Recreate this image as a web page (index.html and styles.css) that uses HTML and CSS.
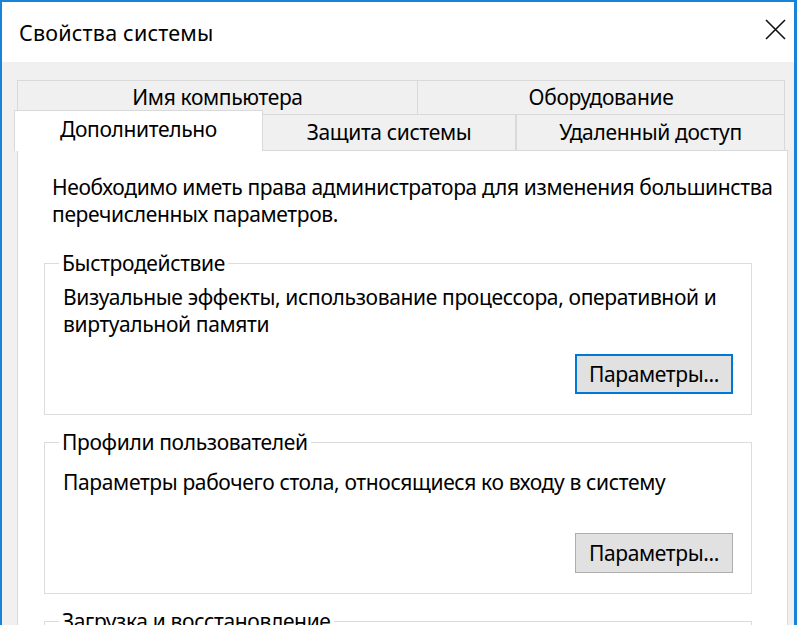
FILE: index.html
```html
<!DOCTYPE html>
<html lang="ru">
<head>
<meta charset="utf-8">
<title>Свойства системы</title>
<link rel="stylesheet" href="styles.css">
</head>
<body>
<div class="window">
  <header class="titlebar">
    <span class="title">Свойства системы</span>
    <svg class="close" width="21" height="21" viewBox="0 0 21 21" aria-label="Закрыть">
      <path d="M1 1 L20 20 M20 1 L1 20" stroke="#111" stroke-width="1.6" fill="none"/>
    </svg>
  </header>
  <div class="dialog">
    <div class="tabs">
      <div class="tab-row back">
        <div class="tab t-name">Имя компьютера</div>
        <div class="tab t-hw">Оборудование</div>
      </div>
      <div class="tab-row front">
        <div class="tab active t-adv">Дополнительно</div>
        <div class="tab t-prot">Защита системы</div>
        <div class="tab t-remote">Удаленный доступ</div>
      </div>
    </div>
    <div class="panel">
      <p class="intro">Необходимо иметь права администратора для изменения большинства<br>перечисленных параметров.</p>

      <fieldset class="group">
        <legend>Быстродействие</legend>
        <div class="group-body">
          <p class="desc">Визуальные эффекты, использование процессора, оперативной и<br>виртуальной памяти</p>
          <div class="actions"><button class="btn focused">Параметры...</button></div>
        </div>
      </fieldset>

      <fieldset class="group">
        <legend>Профили пользователей</legend>
        <div class="group-body">
          <p class="desc lower">Параметры рабочего стола, относящиеся ко входу в систему</p>
          <div class="actions"><button class="btn">Параметры...</button></div>
        </div>
      </fieldset>

      <fieldset class="group">
        <legend>Загрузка и восстановление</legend>
        <div class="group-body"></div>
      </fieldset>
    </div>
  </div>
</div>
</body>
</html>
```
FILE: styles.css
```css
* { box-sizing: border-box; }
html, body {
  margin: 0;
  padding: 0;
  background: #ffffff;
  overflow: hidden;
}
body {
  width: 807px;
  height: 625px;
  font-family: "Noto Sans", "Open Sans", sans-serif;
  font-size: 21px;
  line-height: 27px;
  letter-spacing: -0.35px;
  color: #000;
}
.window {
  width: 797px;
  height: 625px;
  overflow: hidden;
  background: #f0f0f0;
  border-left: 2px solid #1883d7;
  border-top: 2px solid #1883d7;
  border-right: 3px solid #1883d7;
}
.titlebar {
  height: 60px;
  background: #ffffff;
  display: flex;
  align-items: center;
  justify-content: space-between;
  padding: 0 8px 0 17px;
}
.title {
  display: block;
  letter-spacing: 0.2px;
  font-size: 21.5px;
}
.close {
  align-self: flex-start;
  margin-top: 17px;
}
.dialog {
  padding: 18px 0 0 15px;
}
.tabs {
  width: 768px;
}
.tab-row {
  display: flex;
}
.tab {
  display: flex;
  align-items: center;
  justify-content: center;
  background: #f0f0f0;
  border: 1px solid #d9d9d9;
  border-bottom: none;
  white-space: nowrap;
}
.back { height: 34px; }
.back .tab { height: 34px; }
.t-name { width: 401px; }
.t-hw { width: 367px; border-left: none; }
.front { height: 36px; }
.front .tab { height: 36px; }
.t-adv { width: 249px; }
.t-prot { width: 253px; border-left: none; }
.t-remote { width: 269px; }
.front .tab.active {
  position: relative;
  z-index: 1;
  height: 41px;
  margin-top: -4px;
  margin-left: -3px;
  background: #ffffff;
  padding-bottom: 4px;
}
.panel {
  width: 771px;
  background: #ffffff;
  border: 1px solid #d9d9d9;
  padding: 23px 0 0 26px;
  min-height: 500px;
}
.intro {
  margin: 0 0 0 8px;
  white-space: nowrap;
}
.group {
  width: 708px;
  margin: 22px 0 0 0;
  padding: 0 18px 20px 18px;
  border: 1px solid #dcdcdc;
  min-width: 0;
}
.group + .group { margin-top: 14px; }
.group legend {
  margin-left: -4px;
  padding: 0 3px;
  line-height: 27px;
}
.group-body {
  height: 117px;
  display: flex;
  flex-direction: column;
}
.desc {
  margin: 7px 0 0 0;
  white-space: nowrap;
}
.desc.lower { margin-top: 13px; }
.actions {
  margin-top: auto;
  display: flex;
  justify-content: flex-end;
}
.btn {
  width: 158px;
  height: 40px;
  font: inherit;
  letter-spacing: inherit;
  color: #000;
  background: #e1e1e1;
  border: 1px solid #adadad;
  border-radius: 0;
  padding: 0;
  margin: 0;
}
.btn.focused {
  border: 2px solid #0078d7;
}
```
